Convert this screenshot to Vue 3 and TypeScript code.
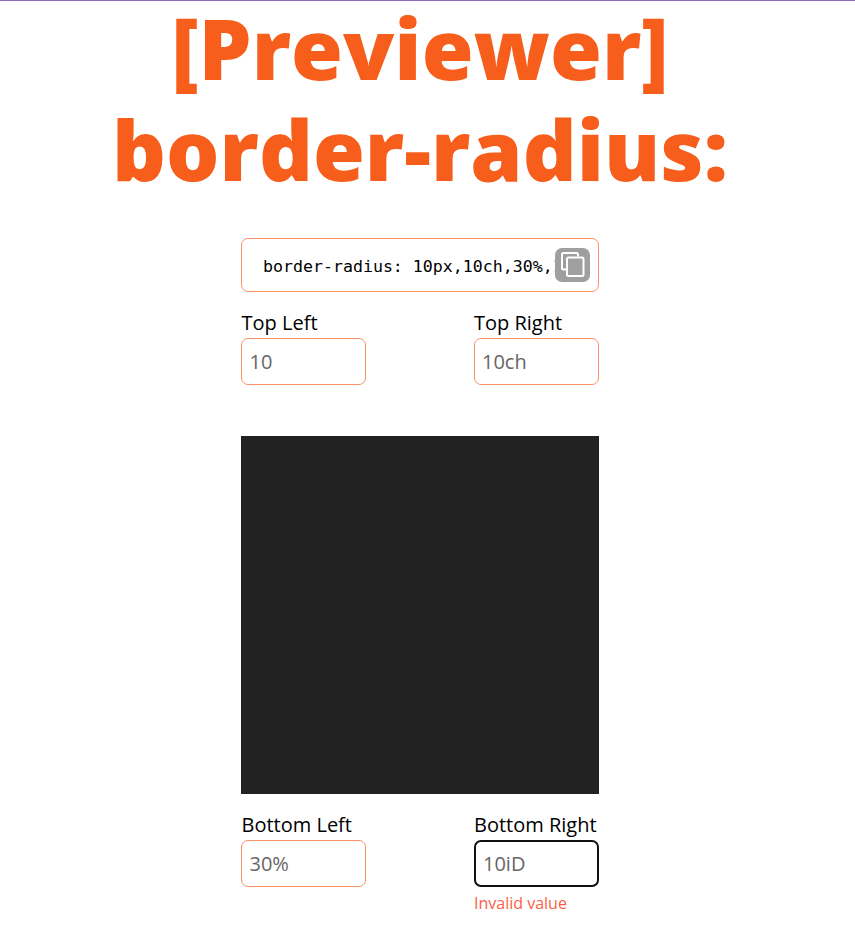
<script setup lang="ts">
import { ref } from 'vue'

const css = 'border-radius: 10px,10ch,30%,10iD'
interface Corner { id: string; label: string; value: string; error?: string }
const top = ref<Corner[]>([
  { id: 'tl', label: 'Top Left', value: '10' },
  { id: 'tr', label: 'Top Right', value: '10ch' },
])
const bottom = ref<Corner[]>([
  { id: 'bl', label: 'Bottom Left', value: '30%' },
  { id: 'br', label: 'Bottom Right', value: '10iD', error: 'Invalid value' },
])
</script>

<template>
  <main class="page">
    <h1>[Previewer]<br>border-radius:</h1>
    <section class="tool">
      <div class="output">
        <code>{{ css }}</code>
        <button class="copy" aria-label="Copy">
          <svg viewBox="0 0 35 34" fill="none" stroke="#fff" stroke-width="2">
            <path d="M11.5 21.5H8.5a1.5 1.5 0 0 1-1.5-1.5V6.5A1.5 1.5 0 0 1 8.5 5h13A1.5 1.5 0 0 1 23 6.5V8.5" />
            <rect x="12" y="9.5" width="16.5" height="18.5" rx="1.5" />
          </svg>
        </button>
      </div>
      <div class="row">
        <div v-for="c in top" :key="c.id" class="field">
          <label :for="c.id">{{ c.label }}</label>
          <input :id="c.id" v-model="c.value">
        </div>
      </div>
      <div class="box"></div>
      <div class="row">
        <div v-for="c in bottom" :key="c.id" class="field">
          <label :for="c.id">{{ c.label }}</label>
          <input :id="c.id" v-model="c.value" :class="{ active: c.error }">
          <span v-if="c.error" class="error">{{ c.error }}</span>
        </div>
      </div>
    </section>
  </main>
</template>

<style>
body { background: #fff; }
</style>

<style scoped>
.page {
  box-sizing: border-box;
  height: 942px;
  border-top: 1px solid #9068be;
  padding-right: 15px;
  font-family: "Open Sans", sans-serif;
  color: #000;
}
h1 {
  margin: -4px 0 0;
  text-align: center;
  font-size: 84px;
  line-height: 101px;
  font-weight: 800;
  color: #f75e1b;
}
.tool { width: 358px; margin: 39px auto 0; }
.output {
  position: relative;
  box-sizing: border-box;
  height: 54px;
  border: 1px solid #fb8f66;
  border-radius: 7px;
  padding: 3px 20px 0 21px;
  display: flex;
  align-items: center;
}
code {
  flex: 1;
  overflow: hidden;
  white-space: nowrap;
  font-family: "DejaVu Sans Mono", monospace;
  font-size: 16.6px;
  line-height: 24px;
  color: #000;
}
.copy {
  position: absolute;
  right: 8px;
  top: 9px;
  width: 35px;
  height: 34px;
  padding: 0;
  border: 0;
  border-radius: 7px;
  background: #9f9f9f;
}
.copy svg { display: block; width: 35px; height: 34px; }
.row { display: flex; justify-content: space-between; margin-top: 16px; }
.field { display: flex; flex-direction: column; width: 125px; }
label { padding-bottom: 1px; font-size: 20px; line-height: 29px; white-space: nowrap; }
.field:first-child label { padding-left: 0.5px; }
input {
  box-sizing: border-box;
  width: 125px;
  height: 47px;
  border: 1px solid #fb8f66;
  border-radius: 7px;
  padding: 0 7px;
  font: 20px "Open Sans", sans-serif;
  color: #666;
  background: #fff;
  outline: none;
}
.field:first-child input { padding-left: 7.5px; }
input.active { border: 2px solid #111; }
.error { margin-top: 4px; font-size: 16px; line-height: 24px; color: #fb6047; }
.box { height: 358px; margin-top: 51px; background: #222; }
</style>
